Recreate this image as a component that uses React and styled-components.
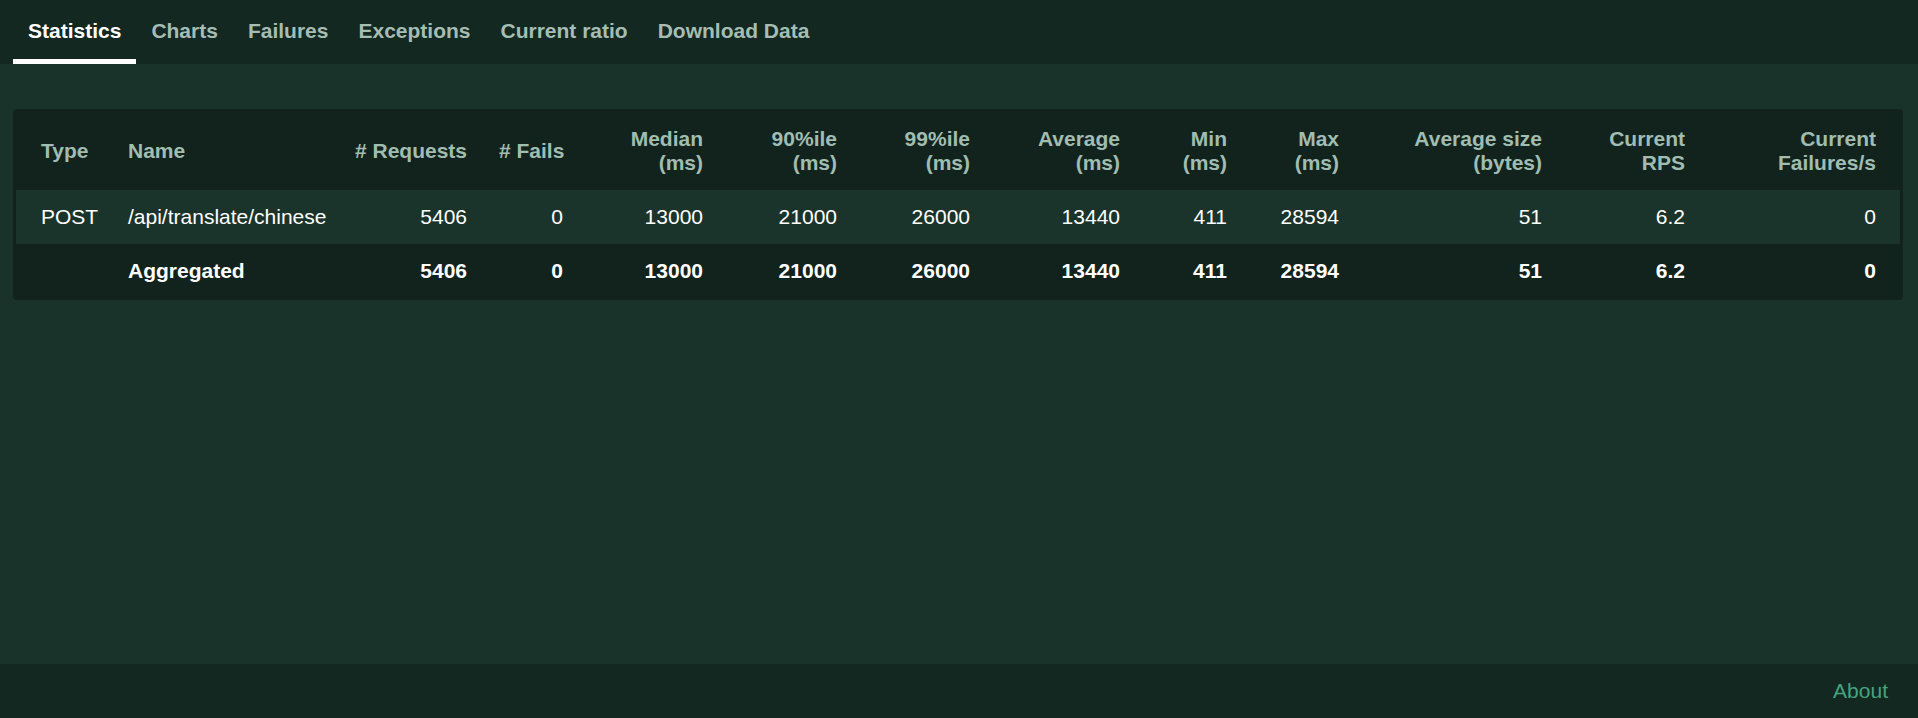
import React from 'react';
import styled, { createGlobalStyle } from 'styled-components';

const GlobalStyle = createGlobalStyle`
    html, body {
        margin: 0;
        padding: 0;
        background: #1a332a;
    }
    body {
        font-family: 'Liberation Sans', Arial, sans-serif;
    }
`;

const tabs = ['Statistics', 'Charts', 'Failures', 'Exceptions', 'Current ratio', 'Download Data'];

const columns = [
    { label: ['Type'], width: 96, align: 'left', first: true },
    { label: ['Name'], width: 227, align: 'left' },
    { label: ['# Requests'], width: 144 },
    { label: ['# Fails'], width: 96 },
    { label: ['Median', '(ms)'], width: 140 },
    { label: ['90%ile', '(ms)'], width: 134 },
    { label: ['99%ile', '(ms)'], width: 133 },
    { label: ['Average', '(ms)'], width: 150 },
    { label: ['Min', '(ms)'], width: 107 },
    { label: ['Max', '(ms)'], width: 112 },
    { label: ['Average size', '(bytes)'], width: 203 },
    { label: ['Current', 'RPS'], width: 143 },
    { label: ['Current', 'Failures/s'], width: 199, last: true },
];

const rows = [
    { cells: ['POST', '/api/translate/chinese', '5406', '0', '13000', '21000', '26000', '13440', '411', '28594', '51', '6.2', '0'], striped: true },
    { cells: ['', 'Aggregated', '5406', '0', '13000', '21000', '26000', '13440', '411', '28594', '51', '6.2', '0'], bold: true },
];

export default function App() {
    return (
        <Page>
            <GlobalStyle />
            <TabBar>
                {tabs.map((t, i) => (
                    <Tab key={t} $active={i === 0}>{t}</Tab>
                ))}
            </TabBar>
            <Main>
                <Card>
                    <Table>
                        <colgroup>
                            {columns.map((c, i) => <col key={i} style={{ width: c.width }} />)}
                        </colgroup>
                        <thead>
                            <tr>
                                {columns.map((c, i) => (
                                    <HeadCell key={i} $align={c.align} $first={c.first} $last={c.last}>
                                        {c.label.map((l, j) => <div key={j}>{l}</div>)}
                                    </HeadCell>
                                ))}
                            </tr>
                        </thead>
                        <tbody>
                            {rows.map((r, ri) => (
                                <Row key={ri} $striped={r.striped}>
                                    {r.cells.map((v, i) => (
                                        <Cell key={i} $align={columns[i].align} $first={columns[i].first} $last={columns[i].last} $bold={r.bold}>
                                            {v}
                                        </Cell>
                                    ))}
                                </Row>
                            ))}
                        </tbody>
                    </Table>
                </Card>
            </Main>
            <Footer>
                <FooterLink href="#">About</FooterLink>
            </Footer>
        </Page>
    );
}

const Page = styled.div`
    display: flex;
    flex-direction: column;
    min-height: 100vh;
    background: #1a332a;
`;

const TabBar = styled.nav`
    display: flex;
    height: 64px;
    padding-left: 13px;
    background: #132821;
`;

const Tab = styled.div`
    display: flex;
    align-items: center;
    padding: 0 15px 2px;
    font-size: 21px;
    font-weight: 700;
    color: ${p => p.$active ? '#ffffff' : '#a5bdb3'};
    box-shadow: ${p => p.$active ? 'inset 0 -5px 0 #ffffff' : 'none'};
    cursor: pointer;
`;

const Main = styled.main`
    flex: 1;
    padding: 45px 15px 0 13px;
`;

const Card = styled.div`
    background: #12231d;
    border-radius: 4px;
    padding: 3px 3px 2px;
`;

const Table = styled.table`
    width: 100%;
    table-layout: fixed;
    border-collapse: collapse;
    font-size: 21px;
    line-height: 24px;
`;

const HeadCell = styled.th`
    height: 78px;
    padding: 0 ${p => p.$last ? '24px' : '16px'} 0 ${p => p.$first ? '25px' : '16px'};
    text-align: ${p => p.$align || 'right'};
    font-weight: 700;
    color: #a0bdb1;
    vertical-align: middle;
    white-space: nowrap;
`;

const Row = styled.tr`
    background: ${p => p.$striped ? '#1b342b' : 'transparent'};
`;

const Cell = styled.td`
    height: 54px;
    padding: 0 ${p => p.$last ? '24px' : '16px'} 0 ${p => p.$first ? '25px' : '16px'};
    text-align: ${p => p.$align || 'right'};
    font-weight: ${p => p.$bold ? 700 : 400};
    color: #ffffff;
    white-space: nowrap;
`;

const Footer = styled.footer`
    display: flex;
    justify-content: flex-end;
    align-items: center;
    height: 54px;
    padding-right: 30px;
    background: #132821;
`;

const FooterLink = styled.a`
    font-size: 21px;
    color: #45a47d;
    text-decoration: none;
`;
